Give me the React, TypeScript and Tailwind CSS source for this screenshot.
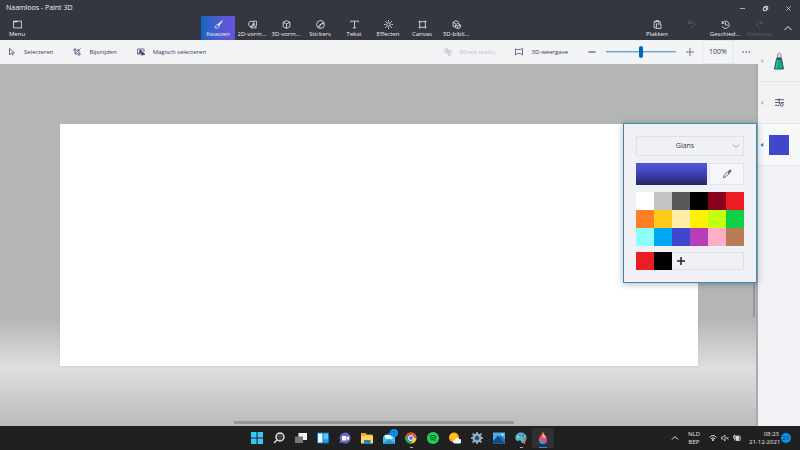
import type { ReactNode } from "react";

const PALETTE = [
  { name: "White", className: "bg-white" },
  { name: "Light grey", className: "bg-[#c3c3c3]" },
  { name: "Dark grey", className: "bg-[#585858]" },
  { name: "Black", className: "bg-black" },
  { name: "Dark red", className: "bg-[#88001b]" },
  { name: "Red", className: "bg-[#ec1c24]" },
  { name: "Orange", className: "bg-[#ff7f27]" },
  { name: "Gold", className: "bg-[#ffca18]" },
  { name: "Light yellow", className: "bg-[#fdeca6]" },
  { name: "Yellow", className: "bg-[#fff200]" },
  { name: "Lime", className: "bg-[#c4ff0e]" },
  { name: "Green", className: "bg-[#0ed145]" },
  { name: "Turquoise", className: "bg-[#8cfffb]" },
  { name: "Blue", className: "bg-[#00a8f3]" },
  { name: "Indigo", className: "bg-[#3f48cc]" },
  { name: "Purple", className: "bg-[#b83dba]" },
  { name: "Pink", className: "bg-[#ffaec8]" },
  { name: "Brown", className: "bg-[#b97a56]" },
];

export default function App() {
  return (
    <div className="flex min-h-screen flex-col bg-[#f0f2f5] font-['Open_Sans','Noto_Sans',sans-serif] text-[6px] leading-[8px] text-[#39355f]">
      <header className="bg-[#343740] text-[#f0f0f3]">
        <TitleBar />
        <Ribbon />
      </header>
      <main className="flex flex-1">
        <div className="relative flex min-w-0 flex-1 flex-col">
          <Toolbar />
          <Workspace />
          <ColorPanel />
        </div>
        <Sidebar />
      </main>
      <Taskbar />
    </div>
  );
}

function Icon({ children, className = "size-2" }: { children: ReactNode; className?: string }) {
  return (
    <svg
      viewBox="0 0 16 16"
      className={className}
      fill="none"
      stroke="currentColor"
      strokeWidth="1.4"
      aria-hidden="true"
    >
      {children}
    </svg>
  );
}

function TitleBar() {
  return (
    <div className="flex h-4 items-center justify-between pl-[6px]">
      <h1 className="text-[7px]">Naamloos - Paint 3D</h1>
      <div className="flex">
        <WindowButton label="Minimaliseren">
          <path d="M2 8h12" />
        </WindowButton>
        <WindowButton label="Verkleinen">
          <path d="M3 6h7v7H3zM6 5V3h7v7h-2" strokeWidth="2" />
        </WindowButton>
        <WindowButton label="Sluiten">
          <path d="M3 3l10 10M13 3L3 13" />
        </WindowButton>
      </div>
    </div>
  );
}

function WindowButton({ label, children }: { label: string; children: ReactNode }) {
  return (
    <button aria-label={label} className="flex h-4 w-[23px] items-center justify-center">
      <Icon className="size-[7px]">{children}</Icon>
    </button>
  );
}

function Ribbon() {
  return (
    <div className="flex h-6 justify-between">
      <RibbonButton label="Menu">
        <path d="M1 2h14v12H1z" />
        <path d="M1 3h7" strokeWidth="2" />
      </RibbonButton>
      <nav className="flex">
        <RibbonButton label="Kwasten" active>
          <path d="M15 1L7 8l2 2z" fill="currentColor" />
          <path d="M7 8c-4 0-3 4-6 5 3 2 8 2 8-3z" />
        </RibbonButton>
        <RibbonButton label="2D-vorm…">
          <circle cx="6" cy="7" r="5" />
          <path d="M9 2h6v9M9 6l6 8H5z" />
        </RibbonButton>
        <RibbonButton label="3D-vorm…">
          <path d="M8 1l6 3v8l-6 3-6-3V4zM2 4l6 3 6-3M8 7v8" />
        </RibbonButton>
        <RibbonButton label="Stickers">
          <path d="M8 1a7 7 0 1 0 7 7c0-4-3-7-7-7zM14 7c-5-2-8 2-7 8M13 4L3 12" />
        </RibbonButton>
        <RibbonButton label="Tekst">
          <path d="M1 4V2h14v2M8 2v12M5 14h6" />
        </RibbonButton>
        <RibbonButton label="Effecten">
          <circle cx="8" cy="8" r="3" />
          <path d="M8 0v3M8 13v3M0 8h3M13 8h3M2 2l3 3M11 11l3 3M14 2l-3 3M5 11l-3 3" />
        </RibbonButton>
        <RibbonButton label="Canvas">
          <path d="M3 1v14M13 1v14M1 3h14M1 13h14" />
        </RibbonButton>
        <RibbonButton label="3D-bibli…">
          <path d="M2 11V4l5-3 5 3v2M2 4l5 3M2 11l4 2M6 9l4-3 5 3v4l-5 3-4-3zM6 9l4 2 5-2M10 11v4" />
        </RibbonButton>
      </nav>
      <div className="flex">
        <RibbonButton label="Plakken">
          <path d="M6 14H2V3h11v3M5 4V1h5v3M6 7h8v8H6z" />
        </RibbonButton>
        <RibbonButton label="Ongedaan maken" iconOnly disabled>
          <path d="M3 1v5h5M3 6c3-5 10-4 10 1 0 4-4 5-6 7" />
        </RibbonButton>
        <RibbonButton label="Geschied…">
          <path d="M2 2v4h4M2 6a6.500 6.500 0 1 1 0 5M8 4v5h4" />
        </RibbonButton>
        <RibbonButton label="Opnieuw" disabled>
          <path d="M13 1v5H8M13 6C10 1 3 2 3 7c0 4 3 5 5 7" />
        </RibbonButton>
        <button aria-label="Lint samenvouwen" className="flex w-6 items-center justify-center">
          <Icon>
            <path d="M1 12l7-7 7 7" strokeWidth="2" />
          </Icon>
        </button>
      </div>
    </div>
  );
}

function RibbonButton({
  label,
  children,
  active = false,
  disabled = false,
  iconOnly = false,
}: {
  label: string;
  children: ReactNode;
  active?: boolean;
  disabled?: boolean;
  iconOnly?: boolean;
}) {
  return (
    <button
      aria-label={label}
      disabled={disabled}
      className={`flex w-[34px] flex-col items-center gap-px pt-1 whitespace-nowrap ${
        active ? "bg-linear-to-r from-[#0964bd] to-[#6950df]" : ""
      } ${disabled ? "text-[#5c5f68]" : ""}`}
    >
      <Icon className="size-[9px]">{children}</Icon>
      {!iconOnly && <span>{label}</span>}
    </button>
  );
}

function Toolbar() {
  return (
    <div className="flex h-6 items-center justify-between bg-[#f2f3f5] pl-2">
      <div className="flex gap-5">
        <ToolButton label="Selecteren">
          <path d="M3 1v13l4-4h6zM8 10l2 5" />
        </ToolButton>
        <ToolButton label="Bijsnijden">
          <path d="M4 0v12h12M0 4h12v12M4 12L15 1" />
        </ToolButton>
        <ToolButton label="Magisch selecteren">
          <path d="M10 12H1V2h13v6" />
          <circle cx="7" cy="6" r="2" fill="currentColor" />
          <path d="M3 11c1-3 6-3 7 0M10 7v8l2-2h4z" fill="currentColor" />
        </ToolButton>
      </div>
      <div className="flex items-center">
        <div className="flex gap-5 pr-5">
          <ToolButton label="Mixed reality" disabled>
            <path d="M1 2l6-1v8l-6-1zM5 4l6 1v8l-6-3zM9 6l5-1v9l-5 1z" />
          </ToolButton>
          <ToolButton label="3D-weergave">
            <path d="M1 2l4 1h6l4-2v13l-4-3H5l-4 3z" />
          </ToolButton>
        </div>
        <button aria-label="Uitzoomen">
          <Icon>
            <path d="M1 8h14" strokeWidth="2" />
          </Icon>
        </button>
        <input
          type="range"
          aria-label="Zoomen"
          defaultValue={50}
          className="mx-[10px] h-3 w-[70px] appearance-none bg-linear-to-b from-transparent from-40% via-[#2487cf] via-40% to-transparent to-60% [&::-webkit-slider-thumb]:h-3 [&::-webkit-slider-thumb]:w-1 [&::-webkit-slider-thumb]:appearance-none [&::-webkit-slider-thumb]:rounded-sm [&::-webkit-slider-thumb]:bg-[#0067b8]"
        />
        <button aria-label="Inzoomen" className="text-[#77748f]">
          <Icon>
            <path d="M0 8h16M8 0v16" strokeWidth="2" />
          </Icon>
        </button>
        <button className="ml-2 h-6 w-8 border border-[#e7e8ef] text-[7px]">100%</button>
        <button aria-label="Meer" className="flex w-6 justify-center">
          <Icon>
            <path d="M1 8h3M7 8h3M13 8h3" strokeWidth="2" />
          </Icon>
        </button>
      </div>
    </div>
  );
}

function ToolButton({
  label,
  children,
  disabled = false,
}: {
  label: string;
  children: ReactNode;
  disabled?: boolean;
}) {
  return (
    <button
      disabled={disabled}
      className={`flex items-center gap-2 whitespace-nowrap ${disabled ? "text-[#c0c0cb]" : ""}`}
    >
      <Icon>{children}</Icon>
      {label}
    </button>
  );
}

function Workspace() {
  return (
    <div className="relative flex flex-1 border-r-2 border-[#a9acab] bg-linear-to-b from-[#b3b6b4] from-70% via-[#dedfde] via-84% to-[#b9bcba] to-100% py-15 pr-[58px] pl-15">
      <div className="flex-1 bg-white shadow-xs" />
      {/* scroll thumbs */}
      <div className="absolute bottom-[2px] left-[31%] h-[3px] w-[37%] bg-[#959796]" />
      <div className="absolute top-[30%] right-px h-2/5 w-[2px] bg-[#959796]" />
    </div>
  );
}

function ColorPanel() {
  return (
    <section
      aria-label="Kleur"
      className="absolute top-[83px] right-px flex w-[134px] flex-col border border-[#3d88bd] bg-[#f0f1f4] p-3 shadow-[0_1px_7px_rgba(0,0,0,0.3)]"
    >
      <div className="relative h-5">
        <select
          aria-label="Materiaal"
          className="h-5 w-full appearance-none border border-[#dfe1e9] pr-[10px] text-center text-[7px] [text-align-last:center]"
        >
          <option>Glans</option>
        </select>
        <Icon className="pointer-events-none absolute top-[6px] right-1 size-2 text-[#9998aa]">
          <path d="M2 5l6 6 6-6" strokeWidth="2" />
        </Icon>
      </div>
      <div className="mt-[7px] flex h-[22px] gap-[2px]">
        <button
          aria-label="Huidige kleur"
          className="flex-1 bg-linear-to-b from-[#5057d6] via-[#4047bd] via-40% to-[#242665]"
        />
        <button
          aria-label="Pipet"
          className="flex w-[35px] items-center justify-center border border-[#e4e6ec] bg-[#f5f6f9] text-[#5c597b]"
        >
          <Icon className="size-[10px]">
            <path d="M8 5l-5 6-1 3 3-1 6-5" />
            <path d="M8 4l4 4M10 5l2-3c2-1 3 0 2 2l-3 3z" fill="currentColor" />
          </Icon>
        </button>
      </div>
      <div className="mt-[7px] grid grid-cols-6">
        {PALETTE.map((color) => (
          <button
            key={color.name}
            aria-label={color.name}
            className={`h-[18px] ${color.className}`}
          />
        ))}
      </div>
      <div className="mt-[6px] flex h-[18px]">
        <button aria-label="Eigen rood" className="w-[18px] bg-[#ec1c24]" />
        <button aria-label="Eigen zwart" className="w-[18px] bg-black" />
        <button
          aria-label="Kleur toevoegen"
          className="flex flex-1 items-center border border-l-0 border-[#dfe1e7] pl-[5px] text-[#222]"
        >
          <Icon>
            <path d="M0 8h16M8 0v16" strokeWidth="3" />
          </Icon>
        </button>
      </div>
    </section>
  );
}

function Sidebar() {
  return (
    <aside className="w-[42px]">
      <SidebarButton label="Markeerstift">
        <svg viewBox="0 0 20 36" className="h-[18px] w-[10px]" aria-hidden="true">
          <path d="M7 8V4l4-3 3 3v4l2 6H5z" fill="#d9d5e1" stroke="#555075" />
          <path d="M5 14h10l4 20H1z" fill="#13a884" stroke="#225563" strokeWidth="2" />
          <path d="M6 15L3 33h3l2-18z" fill="#2bc59b" />
          <path d="M6 11h8l1 4H5z" fill="#46406c" />
        </svg>
      </SidebarButton>
      <SidebarButton label="Opties">
        <Icon className="size-[9px]">
          <path d="M0 3h16M0 8h8M11 8h5M0 13h8" />
          <path d="M7 1v4M8 6v4" strokeWidth="2" />
          <circle cx="12" cy="12" r="2.500" />
        </Icon>
      </SidebarButton>
      <SidebarButton label="Kleur" active>
        <span className="size-5 bg-[#3f48cc]" />
      </SidebarButton>
    </aside>
  );
}

function SidebarButton({
  label,
  children,
  active = false,
}: {
  label: string;
  children: ReactNode;
  active?: boolean;
}) {
  return (
    <button
      aria-label={label}
      className={`flex h-[42px] w-full items-center border-b border-[#e4e6e8] pl-[2px] ${
        active ? "bg-[#f7f9f9]" : "bg-[#f1f3f5]"
      }`}
    >
      <Icon className={active ? "size-1 text-[#0078c8]" : "size-1 text-[#b8bac0]"}>
        <path d="M12 1L3 8l9 7z" fill="currentColor" />
      </Icon>
      <span className="flex w-[30px] justify-center">{children}</span>
    </button>
  );
}

function Taskbar() {
  return (
    <footer className="grid h-6 grid-cols-[1fr_auto_1fr] bg-[#202020] text-[#e6e6e6]">
      <nav className="col-start-2 flex">
        <AppButton label="Start">
          <path d="M0 0h11v11H0zM13 0h11v11H13zM0 13h11v11H0zM13 13h11v11H13z" fill="#38c5f8" />
        </AppButton>
        <AppButton label="Zoeken">
          <circle cx="14" cy="10" r="8" fill="#444" stroke="#ddd" strokeWidth="3" />
          <path d="M8 16l-6 6" stroke="#ddd" strokeWidth="3" />
        </AppButton>
        <AppButton label="Taakweergave">
          <path d="M7 2h17v14H7z" fill="#f0f0f0" />
          <path d="M0 9h16v13H0z" fill="#777" />
        </AppButton>
        <AppButton label="Widgets">
          <rect x="0" y="1" width="24" height="22" rx="2" fill="#0877c9" />
          <path d="M2 3h9v18H2z" fill="#f4fbff" />
          <path d="M13 3h9v12h-9z" fill="#58c6fb" />
          <path d="M13 16h9v5h-9z" fill="#259feb" />
        </AppButton>
        <AppButton label="Chat">
          <path d="M12 1a11 11 0 1 1-6 20l-5 2 1-7A11 11 0 0 1 12 1z" fill="#6b65c9" />
          <path d="M6 8h9v9H6zM16 11l4-3v9l-4-3z" fill="#fff" />
        </AppButton>
        <AppButton label="Verkenner">
          <path d="M0 2h9l3 3h11v6H0z" fill="#e7a724" />
          <path d="M0 7h24v16H0z" fill="#ffd45b" />
          <path d="M6 23v-7h13v7z" fill="#1683d7" />
        </AppButton>
        <AppButton label="Mail" badge="1">
          <path d="M0 9l12-8 12 8v14H0z" fill="#1672b8" />
          <path d="M3 6h18v9H3z" fill="#e9f8ff" />
          <path d="M0 9l12 8 12-8v14H0z" fill="#48bdf3" />
          <path d="M0 23l12-9 12 9z" fill="#209bdc" />
        </AppButton>
        <AppButton label="Chrome" running>
          <circle cx="12" cy="12" r="11" fill="#ffcd40" />
          <path d="M12 12H22A11 11 0 0 0 2 6l5 9z" fill="#e84335" />
          <path d="M2 6a11 11 0 0 0 10 17l5-8-10 0z" fill="#35a853" />
          <circle cx="12" cy="12" r="5" fill="#4285f4" stroke="#fff" strokeWidth="2" />
        </AppButton>
        <AppButton label="Spotify">
          <circle cx="12" cy="12" r="12" fill="#1ed760" />
          <path
            d="M5 8c5-2 10-1 14 1M6 12c4-1 8-1 12 1M7 16c4-1 7-1 10 1"
            stroke="#143b22"
            strokeWidth="2"
            fill="none"
          />
        </AppButton>
        <AppButton label="Weer">
          <circle cx="10" cy="11" r="10" fill="#ffa915" />
          <circle cx="9" cy="9" r="6" fill="#ffc224" />
          <path d="M12 23a4 4 0 0 1 0-8 5 5 0 0 1 9-1 4 4 0 0 1 0 9z" fill="#f5f7fb" />
        </AppButton>
        <AppButton label="Instellingen">
          <path
            d="M12 0v24M0 12h24M3 3l18 18M21 3L3 21"
            stroke="#8b98a5"
            strokeWidth="4"
          />
          <circle cx="12" cy="12" r="7" fill="#1c72bd" stroke="#a6b1bb" strokeWidth="4" />
          <circle cx="12" cy="12" r="3" fill="#174778" />
        </AppButton>
        <AppButton label="Foto's">
          <path d="M0 1h24v22H0z" fill="#46aee9" />
          <path d="M0 18L10 7l14 15v1H0z" fill="#134b87" />
          <path d="M12 10l3-3 9 8v7z" fill="#1c73bc" />
          <circle cx="19" cy="5" r="2" fill="#e8f8ff" />
        </AppButton>
        <AppButton label="Paint" running>
          <path
            d="M12 1C5 1 0 6 1 13s7 5 9 3c2 0 1 6 5 6 5 0 8-6 8-11S18 1 12 1z"
            fill="#49b6e6"
          />
          <circle cx="6" cy="10" r="2" fill="#f1d446" />
          <circle cx="10" cy="6" r="2" fill="#d84b55" />
          <circle cx="16" cy="7" r="2" fill="#237c55" />
          <path d="M17 10h4l-1 14h-3z" fill="#c9782d" />
        </AppButton>
        <AppButton label="Paint 3D" active>
          <path d="M12 0c2 6 8 10 8 16a8 8 0 0 1-16 0C4 10 10 6 12 0z" fill="#ef4b83" />
          <path d="M12 0c1 5 5 8 7 12l-9-2z" fill="#ffc444" />
          <path d="M12 0c-2 6-7 9-8 14l6-3z" fill="#f0574e" />
          <path d="M6 20c5 0 9-3 14-5 1 5-3 9-8 9-3 0-5-2-6-4z" fill="#8c59d9" />
          <path d="M4 14c2 5 8 5 11 9-5 3-12-1-11-9z" fill="#16a8ef" />
        </AppButton>
      </nav>
      <div className="flex items-center justify-end pr-[9px]">
        <button aria-label="Verborgen pictogrammen" className="mr-2">
          <Icon>
            <path d="M2 11l6-6 6 6" strokeWidth="2" />
          </Icon>
        </button>
        <button className="w-[14px] text-center">
          NLD
          <br />
          BEP
        </button>
        <button aria-label="Netwerk, volume en batterij" className="ml-2 flex gap-1">
          <Icon>
            <path d="M1 7c4-5 10-5 14 0M4 10c2-3 6-3 8 0" strokeWidth="2" />
            <circle cx="8" cy="12" r="1.500" fill="currentColor" />
          </Icon>
          <Icon>
            <path d="M1 6h3l4-4v12l-4-4H1zM10 6l5 5M15 6l-5 5" />
          </Icon>
          <Icon>
            <path d="M6 4h8v9H6zM15 7v3M3 1v4M1 4h5v4H1zM3 8v5" />
            <path d="M7 5h4v7H7z" fill="currentColor" />
          </Icon>
        </button>
        <time className="ml-2 w-[30px] text-right whitespace-nowrap" dateTime="2021-12-21T08:23">
          08:23
          <br />
          21-12-2021
        </time>
        <span className="ml-[2px] flex size-[10px] items-center justify-center rounded-full bg-[#0890ed] text-[#12304a]">
          21
        </span>
      </div>
    </footer>
  );
}

function AppButton({
  label,
  children,
  running = false,
  active = false,
  badge,
}: {
  label: string;
  children: ReactNode;
  running?: boolean;
  active?: boolean;
  badge?: string;
}) {
  return (
    <button
      aria-label={label}
      className={`relative my-[2px] flex w-[22px] items-center justify-center rounded-xs ${
        active ? "bg-[#303030]" : ""
      }`}
    >
      <svg viewBox="0 0 24 24" className="size-3" aria-hidden="true">
        {children}
      </svg>
      {badge && (
        <span className="absolute top-px right-[2px] flex size-2 items-center justify-center rounded-full bg-[#0890f5] text-[#123c60]">
          {badge}
        </span>
      )}
      {running && <span className="absolute bottom-0 h-px w-[3px] bg-[#aaa]" />}
      {active && <span className="absolute bottom-0 h-px w-2 bg-[#1595e6]" />}
    </button>
  );
}
